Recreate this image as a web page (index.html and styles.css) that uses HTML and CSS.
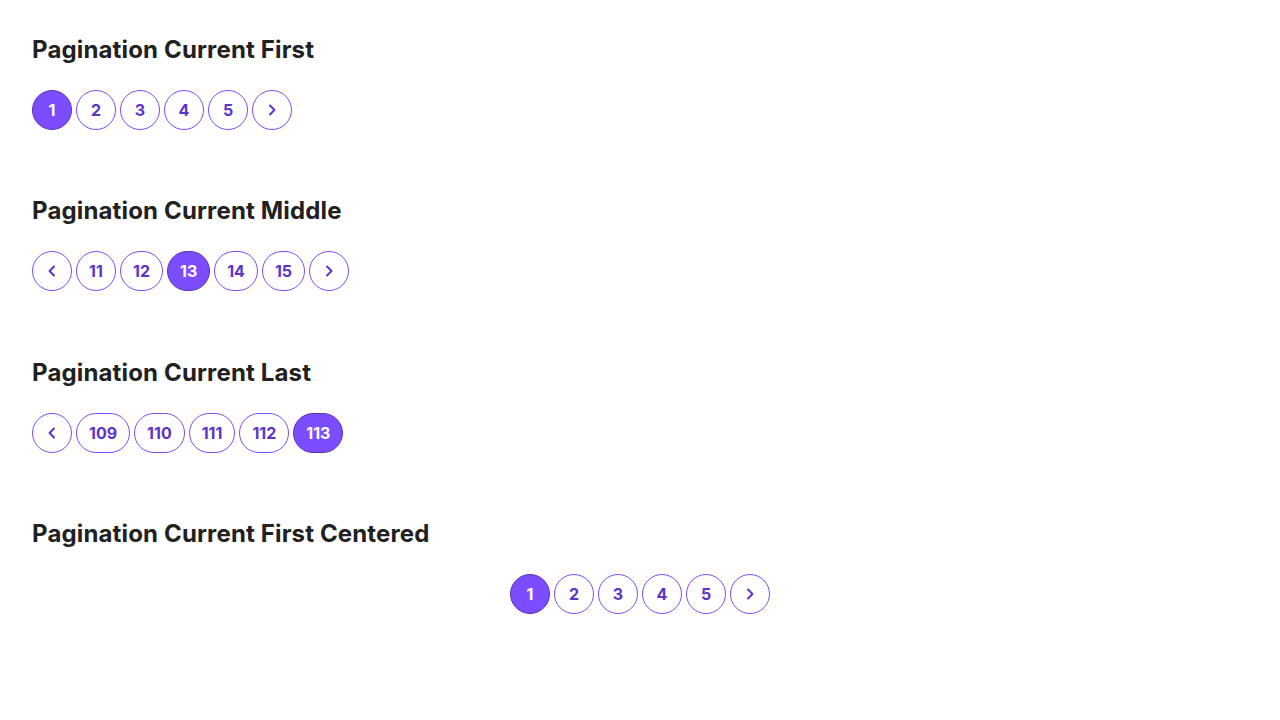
FILE: index.html
```html
<!DOCTYPE html>
<html lang="en">
<head>
<meta charset="utf-8">
<title>Pagination</title>
<link rel="stylesheet" href="styles.css">
</head>
<body>
<main class="page">
  <section class="demo">
    <h2 class="demo-title">Pagination Current First</h2>
    <nav class="pagination">
      <button class="page-btn is-current">1</button>
      <button class="page-btn">2</button>
      <button class="page-btn">3</button>
      <button class="page-btn">4</button>
      <button class="page-btn">5</button>
      <button class="page-btn page-btn-icon" aria-label="Next"><svg class="chev" viewBox="0 0 16 16"><path d="M6 3.5 10.5 8 6 12.5"/></svg></button>
    </nav>
  </section>
  <section class="demo">
    <h2 class="demo-title">Pagination Current Middle</h2>
    <nav class="pagination">
      <button class="page-btn page-btn-icon" aria-label="Previous"><svg class="chev" viewBox="0 0 16 16"><path d="M10 3.5 5.5 8 10 12.5"/></svg></button>
      <button class="page-btn">11</button>
      <button class="page-btn">12</button>
      <button class="page-btn is-current">13</button>
      <button class="page-btn">14</button>
      <button class="page-btn">15</button>
      <button class="page-btn page-btn-icon" aria-label="Next"><svg class="chev" viewBox="0 0 16 16"><path d="M6 3.5 10.5 8 6 12.5"/></svg></button>
    </nav>
  </section>
  <section class="demo">
    <h2 class="demo-title">Pagination Current Last</h2>
    <nav class="pagination">
      <button class="page-btn page-btn-icon" aria-label="Previous"><svg class="chev" viewBox="0 0 16 16"><path d="M10 3.5 5.5 8 10 12.5"/></svg></button>
      <button class="page-btn">109</button>
      <button class="page-btn">110</button>
      <button class="page-btn">111</button>
      <button class="page-btn">112</button>
      <button class="page-btn is-current">113</button>
    </nav>
  </section>
  <section class="demo">
    <h2 class="demo-title">Pagination Current First Centered</h2>
    <nav class="pagination pagination-centered">
      <button class="page-btn is-current">1</button>
      <button class="page-btn">2</button>
      <button class="page-btn">3</button>
      <button class="page-btn">4</button>
      <button class="page-btn">5</button>
      <button class="page-btn page-btn-icon" aria-label="Next"><svg class="chev" viewBox="0 0 16 16"><path d="M6 3.5 10.5 8 6 12.5"/></svg></button>
    </nav>
  </section>
</main>
</body>
</html>
```
FILE: styles.css
```css
html, body {
  margin: 0;
  padding: 0;
  background: #ffffff;
}
body {
  font-family: Inter, "Noto Sans", sans-serif;
  color: #212121;
}
.page {
  padding: 32px 32px 32px;
  display: flex;
  flex-direction: column;
  gap: 63.333px;
}
.demo {
  display: flex;
  flex-direction: column;
  gap: 22px;
}
.demo-title {
  margin: 0;
  font-size: 24px;
  line-height: 36px;
  font-weight: 700;
  color: #212121;
  letter-spacing: 0.15px;
}
.pagination {
  display: flex;
  gap: 4px;
}
.pagination-centered {
  justify-content: center;
}
.page-btn {
  box-sizing: border-box;
  min-width: 40px;
  height: 40px;
  padding: 0 12px;
  border: 1px solid #7c4dff;
  border-radius: 20px;
  background: #ffffff;
  color: #5c34c8;
  font-family: Inter, "Noto Sans", sans-serif;
  font-size: 16px;
  font-weight: 700;
  line-height: 1;
  display: inline-flex;
  align-items: center;
  justify-content: center;
  cursor: pointer;
}
.page-btn-icon {
  padding: 0;
  width: 40px;
}
.page-btn.is-current {
  background: #7c4dff;
  border-color: #5e35b1;
  color: #ffffff;
}
.chev {
  width: 16px;
  height: 16px;
  fill: none;
  stroke: currentColor;
  stroke-width: 2;
  stroke-linecap: round;
  stroke-linejoin: round;
}
```
